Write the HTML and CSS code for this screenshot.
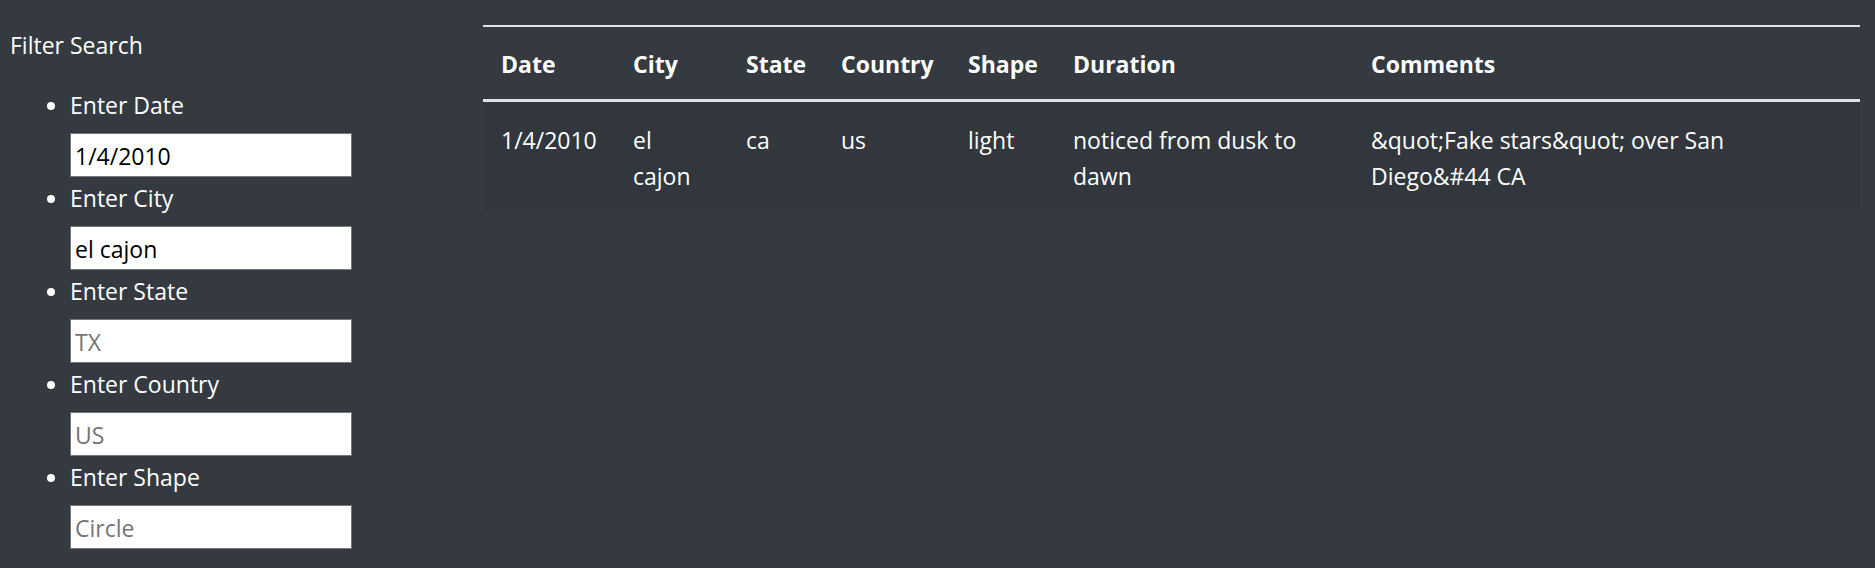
FILE: index.html
```html
<!DOCTYPE html>
<html lang="en">
<head>
<meta charset="utf-8">
<title>UFO Sightings</title>
<link rel="stylesheet" href="styles.css">
</head>
<body>
<div class="page">
  <aside class="sidebar">
    <div class="filter-title">Filter Search</div>
    <ul class="filters">
      <li class="filter">
        <label for="datetime">Enter Date</label>
        <input class="field" id="datetime" type="text" placeholder="1/11/2011" value="1/4/2010">
      </li>
      <li class="filter">
        <label for="city">Enter City</label>
        <input class="field" id="city" type="text" placeholder="roswell" value="el cajon">
      </li>
      <li class="filter">
        <label for="state">Enter State</label>
        <input class="field" id="state" type="text" placeholder="TX">
      </li>
      <li class="filter">
        <label for="country">Enter Country</label>
        <input class="field" id="country" type="text" placeholder="US">
      </li>
      <li class="filter">
        <label for="shape">Enter Shape</label>
        <input class="field" id="shape" type="text" placeholder="Circle">
      </li>
    </ul>
  </aside>
  <main class="content">
    <table class="ufo-table">
      <colgroup>
        <col class="c-date">
        <col class="c-city">
        <col class="c-state">
        <col class="c-country">
        <col class="c-shape">
        <col class="c-duration">
        <col class="c-comments">
      </colgroup>
      <thead>
        <tr>
          <th>Date</th>
          <th>City</th>
          <th>State</th>
          <th>Country</th>
          <th>Shape</th>
          <th>Duration</th>
          <th>Comments</th>
        </tr>
      </thead>
      <tbody>
        <tr>
          <td>1/4/2010</td>
          <td>el cajon</td>
          <td>ca</td>
          <td>us</td>
          <td>light</td>
          <td>noticed from dusk to dawn</td>
          <td>&amp;quot;Fake stars&amp;quot; over San Diego&amp;#44 CA</td>
        </tr>
      </tbody>
    </table>
  </main>
</div>
</body>
</html>
```
FILE: styles.css
```css
html, body {
  margin: 0;
  padding: 0;
}
body {
  background: #343a40;
  color: #ffffff;
  font-family: "Open Sans", "Noto Sans", "Liberation Sans", sans-serif;
  font-size: 23px;
  line-height: 36px;
}
.page {
  display: flex;
  align-items: flex-start;
  padding: 25px 15px 0 10px;
  height: 568px;
  box-sizing: border-box;
  overflow: hidden;
}
.sidebar {
  width: 473px;
  flex: none;
}
.filter-title {
  padding-top: 2px;
  line-height: 36px;
}
.filters {
  margin: 22px 0 0 0;
  padding-left: 60px;
  list-style: disc;
}
.filter label {
  display: block;
  padding-top: 2px;
  margin-bottom: 10px;
}
.field {
  display: block;
  box-sizing: border-box;
  width: 282px;
  height: 44px;
  margin: 0 0 1px 0;
  padding: 2px 4px 0;
  border: 1.5px solid #767676;
  background: #ffffff;
  color: #000000;
  font-family: inherit;
  font-size: 23px;
  line-height: 36px;
}
.field::placeholder {
  color: #757575;
}
.content {
  flex: 1;
  min-width: 0;
}
.ufo-table {
  width: 100%;
  border-collapse: collapse;
  table-layout: fixed;
}
.c-date { width: 132px; }
.c-city { width: 113px; }
.c-state { width: 95px; }
.c-country { width: 127px; }
.c-shape { width: 105px; }
.c-duration { width: 298px; }
.ufo-table th {
  text-align: left;
  font-weight: 700;
  padding: 19px 18px 17px;
  border-top: 2px solid #dee2e6;
  border-bottom: 3px solid #dee2e6;
  vertical-align: bottom;
}
.ufo-table td {
  padding: 20px 18px 16px;
  vertical-align: top;
  background: rgba(0, 0, 0, 0.05);
}
```
